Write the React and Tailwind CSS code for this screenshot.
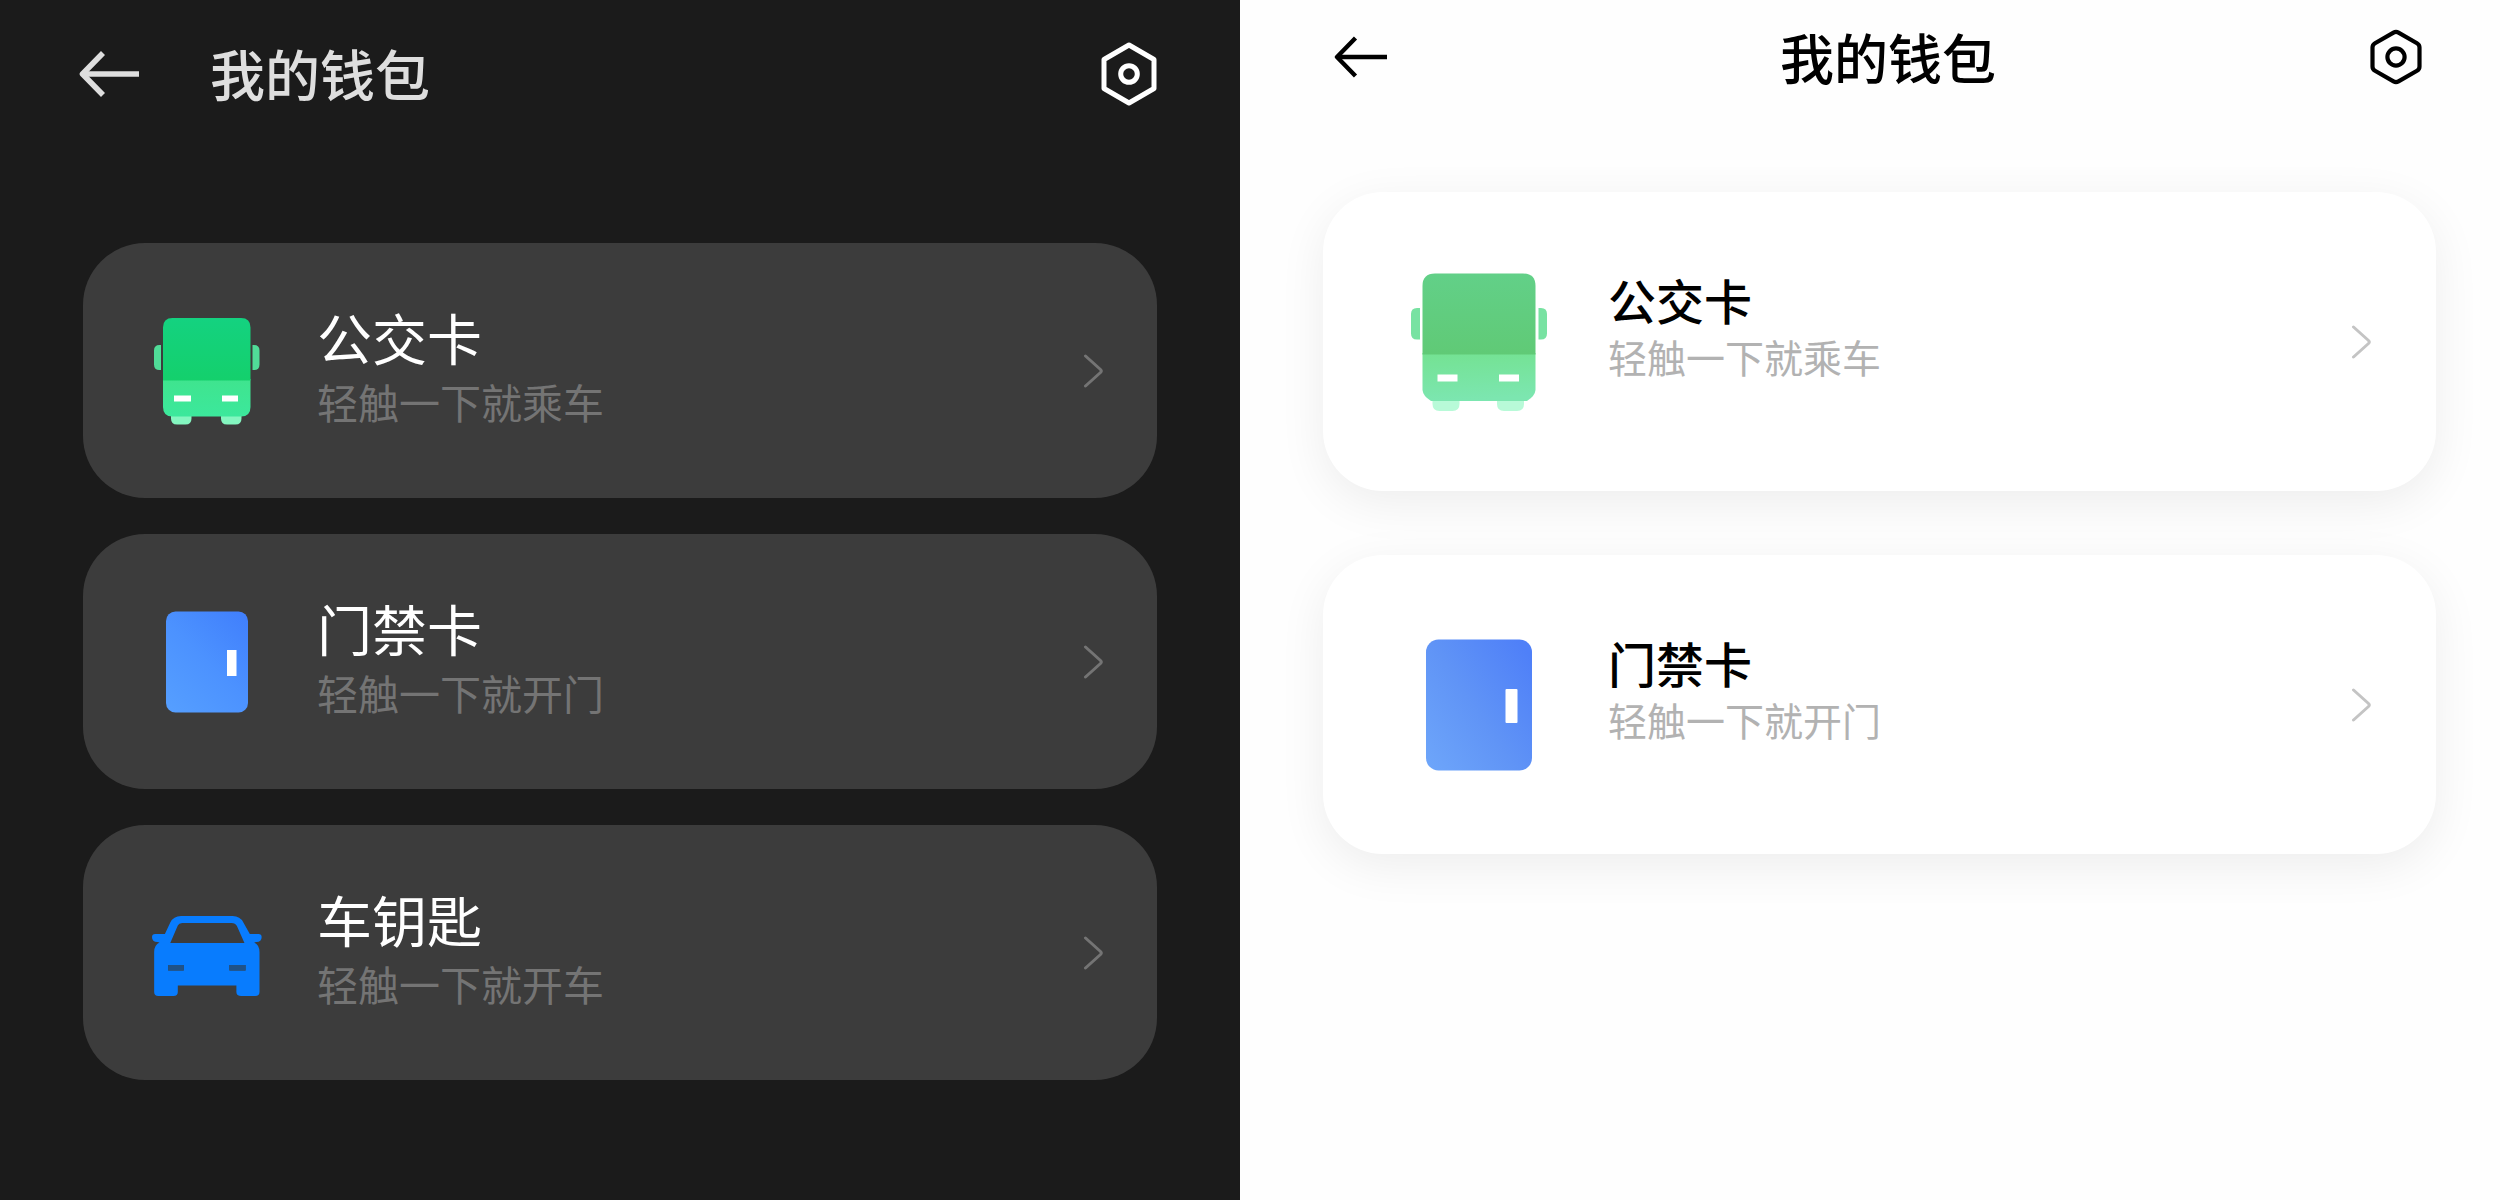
const FONT = "font-['Noto_Sans_CJK_SC','Noto_Sans',sans-serif]";

function BackDark() {
  return (
    <svg width="60" height="46" viewBox="0 0 60 46" fill="none" stroke="#dedede" strokeWidth="5.6" strokeLinejoin="round">
      <path d="M24 2 L3.5 23 L24 44" />
      <path d="M3.5 23 H60" />
    </svg>
  );
}

function BackLight() {
  return (
    <svg width="54" height="42" viewBox="0 0 54 42" fill="none" stroke="#000" strokeWidth="4.4" strokeLinejoin="round">
      <path d="M21.5 2 L3 21 L21.5 40" />
      <path d="M3 21 H53" />
    </svg>
  );
}

function HexDark() {
  return (
    <svg width="56" height="64" viewBox="0 0 56 64" fill="none" stroke="#fff" strokeWidth="5" strokeLinejoin="round">
      <path d="M28 3 L53 17.5 V46.5 L28 61 L3 46.5 V17.5 Z" />
      <circle cx="28" cy="32" r="8.3" />
    </svg>
  );
}

function HexLight() {
  return (
    <svg width="52" height="56" viewBox="0 0 52 56" fill="none" stroke="#000" strokeWidth="4.2" strokeLinejoin="round">
      <path d="M23.5 3.6 Q26 2.2 28.5 3.6 L47 14.2 Q49.5 15.7 49.5 18.5 V37.5 Q49.5 40.3 47 41.8 L28.5 52.4 Q26 53.8 23.5 52.4 L5 41.8 Q2.5 40.3 2.5 37.5 V18.5 Q2.5 15.7 5 14.2 Z" />
      <circle cx="26" cy="28" r="8.6" />
    </svg>
  );
}

function BusDark() {
  return (
    <svg width="108" height="108" viewBox="0 0 108 108">
      <defs>
        <linearGradient id="busDarkTop" x1="0" y1="0" x2="0" y2="1">
          <stop offset="0" stopColor="#14d280" />
          <stop offset="1" stopColor="#14d06c" />
        </linearGradient>
        <linearGradient id="busDarkBottom" x1="0" y1="0" x2="0" y2="1">
          <stop offset="0" stopColor="#3fe48e" />
          <stop offset="1" stopColor="#3ce89c" />
        </linearGradient>
      </defs>
      <path d="M18 97 H38.5 V101.5 Q38.5 107.5 32.5 107.5 H24 Q18 107.5 18 101.5 Z M68 97 H88.5 V101.5 Q88.5 107.5 82.5 107.5 H74 Q68 107.5 68 101.5 Z" fill="#84f6c0" />
      <path d="M8 28 V53 H6.5 Q1 53 1 47.5 V33.5 Q1 28 6.5 28 Z M99.5 28 V53 H101 Q106.5 53 106.5 47.5 V33.5 Q106.5 28 101 28 Z" fill="#50dc98" />
      <path d="M10 62 H97.5 V90 Q97.5 99.5 88 99.5 H19.5 Q10 99.5 10 90 Z" fill="url(#busDarkBottom)" />
      <path d="M10 63.5 V10.5 Q10 1 19.5 1 H88 Q97.5 1 97.5 10.5 V63.5 Z" fill="url(#busDarkTop)" />
      <path d="M21 78.5 H38 V84.5 H21 Z M69 78.5 H85 V84.5 H69 Z" fill="#fff" />
    </svg>
  );
}

function BusLight() {
  return (
    <svg width="138" height="138" viewBox="0 0 138 138">
      <defs>
        <linearGradient id="busLightTop" x1="0" y1="0" x2="0" y2="1">
          <stop offset="0" stopColor="#62d088" />
          <stop offset="1" stopColor="#60ca76" />
        </linearGradient>
        <linearGradient id="busLightBottom" x1="0" y1="0" x2="0.1" y2="1">
          <stop offset="0" stopColor="#74e292" />
          <stop offset="1" stopColor="#7ce6b0" />
        </linearGradient>
      </defs>
      <path d="M22.5 128 H49.5 V131 Q49.5 138 42.5 138 H29.5 Q22.5 138 22.5 131 Z M87 128 H114 V131 Q114 138 107 138 H94 Q87 138 87 131 Z" fill="#b8fad8" />
      <path d="M10 35 V66.5 H7 Q1 66.5 1 60.5 V41 Q1 35 7 35 Z M128.5 35 V66.5 H131 Q137 66.5 137 60.5 V41 Q137 35 131 35 Z" fill="#78e2a2" />
      <path d="M12.5 80 H125.5 V117 Q125 123 117 128 H21 Q13 123 12.5 117 Z" fill="url(#busLightBottom)" />
      <path d="M12.5 81.5 V13 Q12.5 .5 25 .5 H113 Q125.5 .5 125.5 13 V81.5 Z" fill="url(#busLightTop)" />
      <path d="M27.5 101.5 H47.5 V108.5 H27.5 Z M89 101.5 H109 V108.5 H89 Z" fill="#fff" />
    </svg>
  );
}

function DoorDark() {
  return (
    <svg width="84" height="102" viewBox="0 0 84 102">
      <defs>
        <linearGradient id="doorDark" x1="0.1" y1="1" x2="0.9" y2="0">
          <stop offset="0" stopColor="#559eff" />
          <stop offset="0.5" stopColor="#4c92ff" />
          <stop offset="1" stopColor="#4180fc" />
        </linearGradient>
      </defs>
      <rect x="1" y="0.5" width="82" height="101" rx="9.5" fill="url(#doorDark)" />
      <rect x="62" y="39" width="9.5" height="26" fill="#fff" />
    </svg>
  );
}

function DoorLight() {
  return (
    <svg width="108" height="132" viewBox="0 0 108 132">
      <defs>
        <linearGradient id="doorLight" x1="0" y1="1" x2="1" y2="0.15">
          <stop offset="0" stopColor="#6ea6fa" />
          <stop offset="0.5" stopColor="#6094f6" />
          <stop offset="1" stopColor="#4f80f8" />
        </linearGradient>
      </defs>
      <rect x="1" y="0.5" width="106" height="131" rx="12.5" fill="url(#doorLight)" />
      <rect x="80.5" y="50" width="12" height="34" rx="1" fill="#fff" />
    </svg>
  );
}

function Car() {
  return (
    <svg width="110" height="90" viewBox="0 0 110 90">
      <g transform="scale(1.075 1)">
        <path
          fillRule="evenodd"
          fill="#087cfe"
          d="M27 8 H75 Q82 8 85 14.5 L91 26 H99 Q102 26 102 29 Q102 34 97 34 L95 34.5 Q100 37 100 44 V84 Q100 88 96 88 H83 Q78.5 88 78.5 84 V77.5 H24 V84 Q24 88 20 88 H6 Q2 88 2 84 V44 Q2 37 7 34.5 L5 34 Q0 34 0 29 Q0 26 3 26 H12 L17 14.5 Q20 8 27 8 Z M28 15 Q25 15 24 17.5 L17 35 H86 L79 18 Q77.5 15 74 15 Z M15 57 V62.5 H29.5 V57 Z M72 57 V62.5 H87 V57 Z"
        />
        <path d="M15 57 H29.5 V62.5 H15 Z M72 57 H87 V62.5 H72 Z" fill="#1f5288" />
      </g>
    </svg>
  );
}

function Chevron({ color }) {
  return (
    <svg width="20" height="34" viewBox="0 0 20 34" fill="none" stroke={color} strokeWidth="3" strokeLinecap="round" strokeLinejoin="round">
      <path d="M2.5 2 L17.5 15.5 Q19 17 17.5 18.5 L2.5 32" />
    </svg>
  );
}

const darkCards = [
  { title: "公交卡", text: "轻触一下就乘车", Icon: BusDark },
  { title: "门禁卡", text: "轻触一下就开门", Icon: DoorDark },
  { title: "车钥匙", text: "轻触一下就开车", Icon: Car },
];

const lightCards = [
  { title: "公交卡", text: "轻触一下就乘车", Icon: BusLight },
  { title: "门禁卡", text: "轻触一下就开门", Icon: DoorLight },
];

export default function App() {
  return (
    <div lang="zh-CN" className={`flex min-h-screen ${FONT}`}>
      <section className="w-[49.6%] bg-[#1b1b1b] px-[83px] pt-[35px]">
        <header className="flex items-center">
          <button aria-label="返回" className="-ml-1"><BackDark /></button>
          <h1 className="ml-[71px] flex-1 pb-1 text-[55px] leading-[74px] font-medium text-[#dedede]">我的钱包</h1>
          <button aria-label="设置"><HexDark /></button>
        </header>
        <div className="mt-[130px] flex flex-col gap-9">
          {darkCards.map(({ title, text, Icon }) => (
            <button key={title} className="flex h-[255px] items-center rounded-[62px] bg-[#3c3c3c] pr-[54px] pl-[66px] text-left">
              <span className="flex w-[116px] shrink-0 justify-center"><Icon /></span>
              <span className="ml-[52px] flex-1 pb-2">
                <span className="block text-[55px] leading-[68px] text-white">{title}</span>
                <span className="block text-[41px] leading-[62px] text-[#747474]">{text}</span>
              </span>
              <Chevron color="#747474" />
            </button>
          ))}
        </div>
      </section>
      <section className="flex-1 bg-[#fefefe] pt-[18px] pr-16 pl-[83px]">
        <header className="flex items-center justify-between pr-[14px] pl-[11px]">
          <button aria-label="返回" className="w-[72px]"><BackLight /></button>
          <h1 className="text-[54px] leading-[78px] font-medium text-black">我的钱包</h1>
          <button aria-label="设置"><HexLight /></button>
        </header>
        <div className="mt-24 flex flex-col gap-16">
          {lightCards.map(({ title, text, Icon }) => (
            <button key={title} className="flex h-[299px] items-center rounded-[60px] bg-white pr-[65px] pl-[87px] text-left shadow-[0_12px_48px_rgba(0,0,0,0.07)]">
              <span className="flex w-[138px] shrink-0 justify-center"><Icon /></span>
              <span className="ml-[60px] flex-1 pb-8">
                <span className="block text-[48px] leading-[60px] font-medium text-black">{title}</span>
                <span className="block text-[39px] leading-[54px] text-[#b2b2b2]">{text}</span>
              </span>
              <Chevron color="#c4c4c4" />
            </button>
          ))}
        </div>
      </section>
    </div>
  );
}
